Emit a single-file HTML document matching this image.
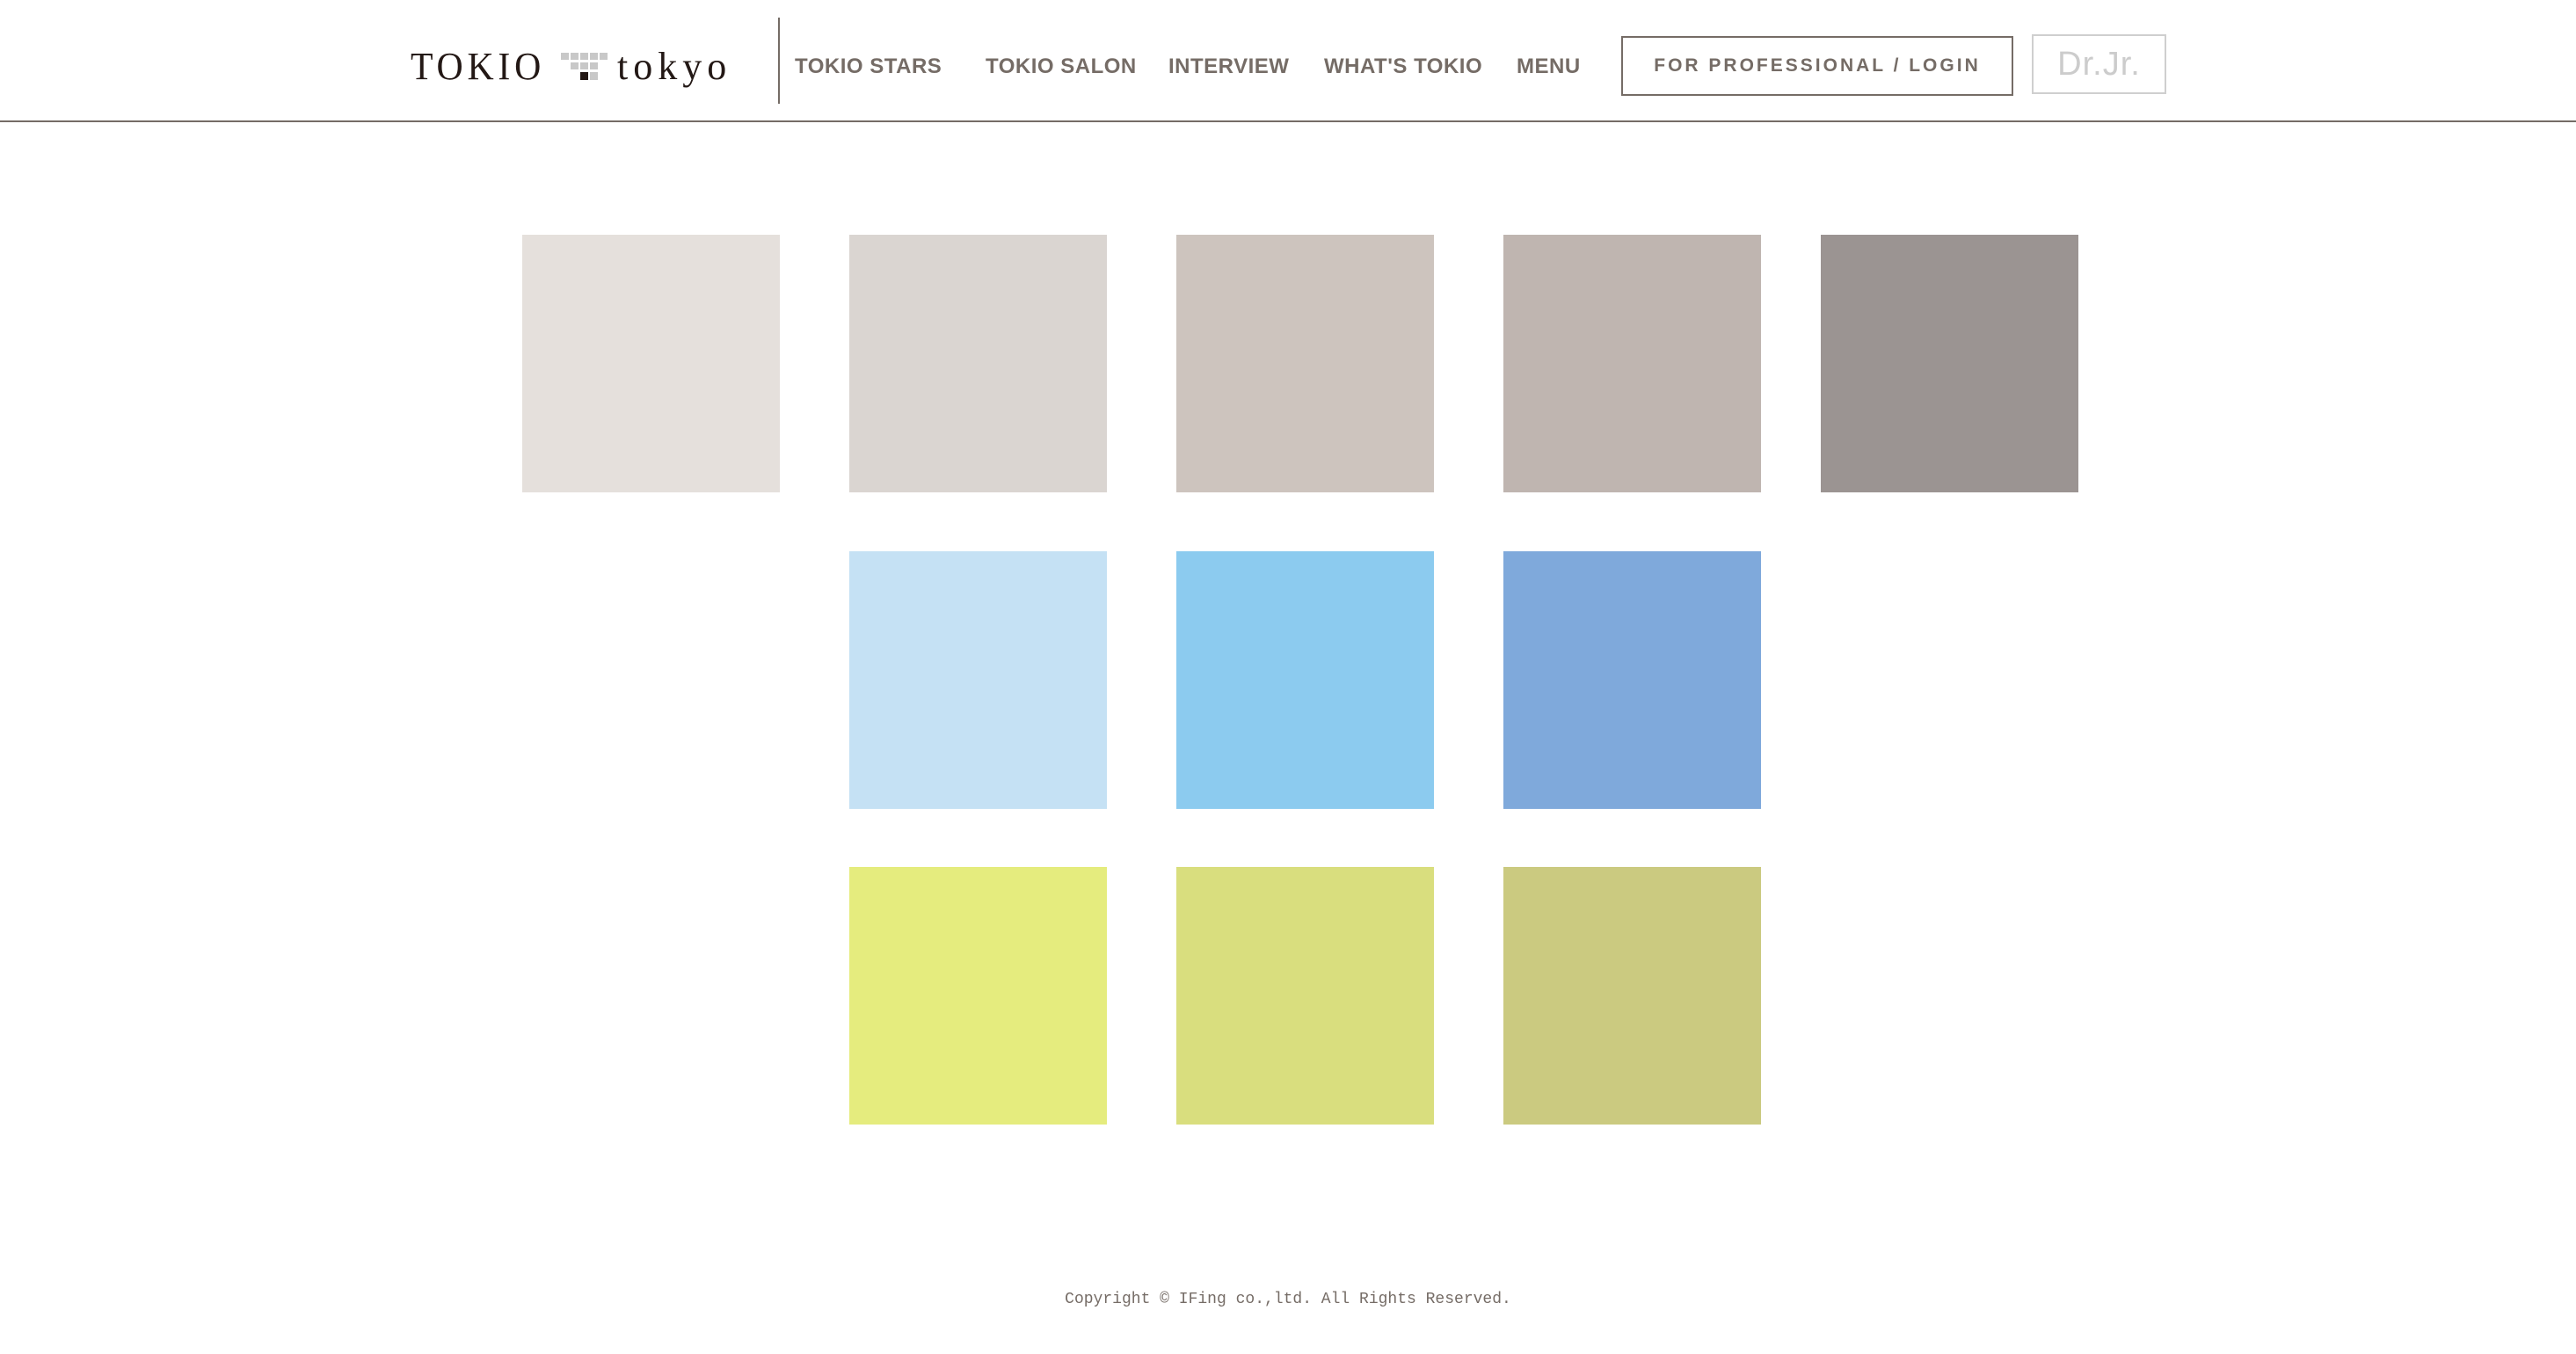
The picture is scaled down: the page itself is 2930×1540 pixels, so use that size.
<!DOCTYPE html>
<html><head><meta charset="utf-8"><style>
*{margin:0;padding:0;box-sizing:border-box}
body{width:2930px;height:1540px;background:#fff;position:relative;overflow:hidden;font-family:"Liberation Sans",sans-serif}
.a{position:absolute}
.nav{position:absolute;top:62px;font-size:24px;color:#756c66;white-space:nowrap;letter-spacing:0.5px;transform:scaleX(1.0);transform-origin:left;font-weight:bold}
.sw{position:absolute;width:293px;height:293px}
</style></head><body>
<div class="a" style="left:467px;top:50px;font-family:'Liberation Serif',serif;font-size:44px;color:#231815;letter-spacing:5px;white-space:nowrap;line-height:52px;transform:scaleX(0.95);transform-origin:left">TOKIO</div>
<svg class="a" style="left:638px;top:60px" width="56" height="32">
<g fill="#c8c8c8">
<rect x="0" y="0" width="9" height="8"/><rect x="11" y="0" width="9" height="8"/><rect x="22" y="0" width="9" height="8"/><rect x="33" y="0" width="9" height="8"/><rect x="44" y="0" width="9" height="8"/>
<rect x="11" y="11" width="9" height="8"/><rect x="22" y="11" width="9" height="8"/><rect x="33" y="11" width="9" height="8"/>
<rect x="33" y="22" width="9" height="9"/></g>
<rect x="22" y="22" width="9" height="9" fill="#231815"/>
</svg>
<div class="a" style="left:702px;top:50px;font-family:'Liberation Serif',serif;font-size:44px;color:#231815;letter-spacing:6px;white-space:nowrap;line-height:52px">tokyo</div>
<div class="a" style="left:885px;top:20px;width:2px;height:98px;background:#756c66"></div>
<div class="nav" style="left:904px">TOKIO STARS</div>
<div class="nav" style="left:1121px">TOKIO SALON</div>
<div class="nav" style="left:1329px">INTERVIEW</div>
<div class="nav" style="left:1506px">WHAT'S TOKIO</div>
<div class="nav" style="left:1725px">MENU</div>
<div class="a" style="left:1844px;top:41px;width:446px;height:68px;border:2px solid #756c66;color:#756c66;font-size:21px;font-weight:bold;letter-spacing:3px;text-align:center;line-height:64px;white-space:nowrap">FOR PROFESSIONAL / LOGIN</div>
<div class="a" style="left:2311px;top:39px;width:153px;height:68px;border:2px solid #cfcfcf;color:#cccccc;font-size:38px;text-align:center;line-height:64px;letter-spacing:1px">Dr.Jr.</div>
<div class="a" style="left:0;top:137px;width:2930px;height:2px;background:#756c66"></div>

<div class="sw" style="left:594px;top:267px;background:#e5e0dc"></div>
<div class="sw" style="left:966px;top:267px;background:#dad5d1"></div>
<div class="sw" style="left:1338px;top:267px;background:#cdc4be"></div>
<div class="sw" style="left:1710px;top:267px;background:#bfb5b0"></div>
<div class="sw" style="left:2071px;top:267px;background:#9b9492"></div>
<div class="sw" style="left:966px;top:627px;background:#c5e1f4"></div>
<div class="sw" style="left:1338px;top:627px;background:#8ccbef"></div>
<div class="sw" style="left:1710px;top:627px;background:#7fa9db"></div>
<div class="sw" style="left:966px;top:986px;background:#e5ec7e"></div>
<div class="sw" style="left:1338px;top:986px;background:#d9de7e"></div>
<div class="sw" style="left:1710px;top:986px;background:#cbca80"></div>

<div class="a" style="left:0;width:2930px;top:1468px;text-align:center;font-family:'Liberation Mono',monospace;font-size:18px;color:#756c66">Copyright © IFing co.,ltd. All Rights Reserved.</div>
</body></html>
